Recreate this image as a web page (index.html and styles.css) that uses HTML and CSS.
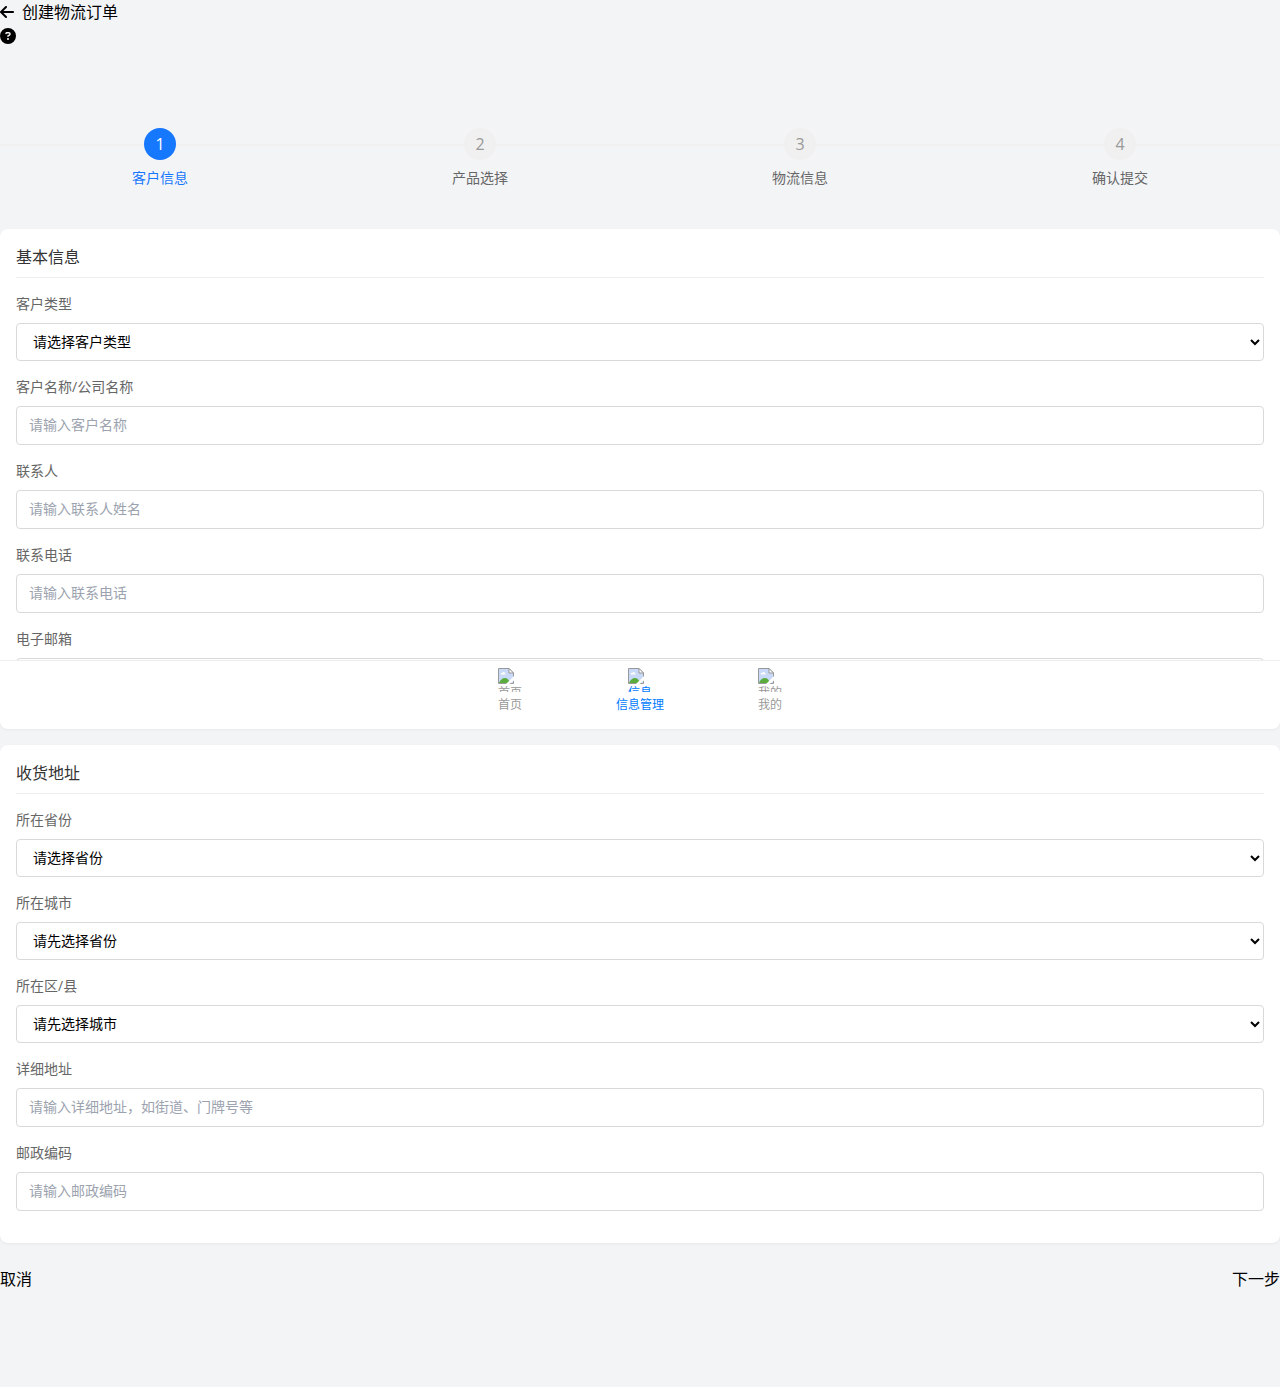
FILE: index.html
```html
<!DOCTYPE html>
<html lang="zh-CN">
<head>
<meta charset="utf-8">
<title>创建物流订单</title>
<link rel="stylesheet" href="styles.css">
</head>
<body>
<svg class="defs" width="0" height="0" aria-hidden="true">
  <symbol id="missing" viewBox="0 0 16 16">
    <path d="M.5.500h10.500l4.500 4.500v10.500H.5z" fill="#c9d9f8"/>
    <path d="M3 6.500c-.8-1.500.8-2.300 1.400-1.500.5-1.500 2.500-1.200 2.500.2 1.200 0 1.200 1.300.3 1.300z" fill="#fff"/>
    <path d="M1 15c1-3 3.500-5 6-5 2 0 4 1.500 5 5z" fill="#5aac3c"/>
    <path d="M.5 15.500V.5H11l4.500 4.500v10.500z" fill="none" stroke="#999"/>
    <path d="M11 .5V5h4.500z" fill="#fff" stroke="#999"/>
    <path d="M8 16L16 8v4.500L11.500 16z" fill="#fff"/>
  </symbol>
</svg>
<header class="header">
  <div class="header-left">
    <svg class="back" viewBox="0 0 448 512"><path d="M9.400 233.400c-12.500 12.500-12.500 32.800 0 45.300l160 160c12.500 12.500 32.800 12.500 45.300 0s12.500-32.800 0-45.300L109.200 288 416 288c17.700 0 32-14.300 32-32s-14.300-32-32-32l-306.700 0L214.600 118.600c12.500-12.500 12.500-32.800 0-45.300s-32.800-12.500-45.300 0l-160 160z"/></svg>
    <span>创建物流订单</span>
  </div>
  <div class="header-right">
    <svg class="help" viewBox="0 0 512 512"><path d="M256 512A256 256 0 1 0 256 0a256 256 0 1 0 0 512zM169.800 165.300c7.900-22.300 29.100-37.300 52.800-37.300l58.300 0c34.900 0 63.100 28.300 63.100 63.100c0 22.600-12.100 43.500-31.700 54.800L280 264.400c-.2 13-10.900 23.600-24 23.600c-13.300 0-24-10.700-24-24l0-13.500c0-8.600 4.600-16.500 12.100-20.800l44.300-25.400c4.700-2.700 7.600-7.700 7.600-13.100c0-8.400-6.800-15.100-15.100-15.100l-58.300 0c-3.400 0-6.400 2.100-7.500 5.300l-.4 1.200c-4.400 12.500-18.200 19-30.600 14.600s-19-18.200-14.600-30.600l.4-1.200zM224 352a32 32 0 1 1 64 0 32 32 0 1 1 -64 0z"/></svg>
  </div>
</header>
<main>
  <ol class="steps">
    <li class="step active"><span class="num">1</span><span class="name">客户信息</span></li>
    <li class="step"><span class="num">2</span><span class="name">产品选择</span></li>
    <li class="step"><span class="num">3</span><span class="name">物流信息</span></li>
    <li class="step"><span class="num">4</span><span class="name">确认提交</span></li>
  </ol>
  <section class="card">
    <h2 class="title">基本信息</h2>
    <div class="field"><label class="label">客户类型</label><select class="control select"><option>请选择客户类型</option></select></div>
    <div class="field"><label class="label">客户名称/公司名称</label><input class="control input" placeholder="请输入客户名称"></div>
    <div class="field"><label class="label">联系人</label><input class="control input" placeholder="请输入联系人姓名"></div>
    <div class="field"><label class="label">联系电话</label><input class="control input" placeholder="请输入联系电话"></div>
    <div class="field"><label class="label">电子邮箱</label><input class="control input"></div>
  </section>
  <section class="card">
    <h2 class="title">收货地址</h2>
    <div class="field"><label class="label">所在省份</label><select class="control select"><option>请选择省份</option></select></div>
    <div class="field"><label class="label">所在城市</label><select class="control select"><option>请先选择省份</option></select></div>
    <div class="field"><label class="label">所在区/县</label><select class="control select"><option>请先选择城市</option></select></div>
    <div class="field"><label class="label">详细地址</label><input class="control input" placeholder="请输入详细地址，如街道、门牌号等"></div>
    <div class="field"><label class="label">邮政编码</label><input class="control input" placeholder="请输入邮政编码"></div>
  </section>
  <div class="actions"><span>取消</span><span>下一步</span></div>
</main>
<nav class="tabbar">
  <a class="tab"><span class="tab-icon"><svg><use href="#missing"/></svg><span>首页</span></span><span class="tab-name">首页</span></a>
  <a class="tab current"><span class="tab-icon"><svg><use href="#missing"/></svg><span>信息</span></span><span class="tab-name">信息管理</span></a>
  <a class="tab"><span class="tab-icon"><svg><use href="#missing"/></svg><span>我的</span></span><span class="tab-name">我的</span></a>
</nav>
</body>
</html>
```
FILE: styles.css
```css
* { box-sizing: border-box; }
body {
  position: relative;
  margin: 0;
  min-height: 1387px;
  background: #f3f4f6;
  color: #000;
  font: 16px/24px "Open Sans", "Noto Sans CJK SC", sans-serif;
}
.defs { position: absolute; }
.header { height: 48px; }
.header-left { display: flex; align-items: center; gap: 8px; height: 24px; }
.header-right { display: flex; align-items: center; height: 24px; }
.back { width: 14px; height: 16px; }
.help { width: 16px; height: 16px; }
.steps {
  display: flex;
  margin: 0;
  padding: 80px 0 40px;
  list-style: none;
}
.step {
  flex: 1;
  display: flex;
  flex-direction: column;
  align-items: center;
  gap: 8px;
  background: linear-gradient(#f0f0f0, #f0f0f0) 0 16px / 100% 2px no-repeat;
}
.num {
  width: 32px;
  height: 32px;
  border-radius: 50%;
  background: #f0f0f0;
  color: #999;
  line-height: 32px;
  text-align: center;
}
.name { padding-bottom: 2px; color: #666; font-size: 14px; line-height: 19px; }
.active .num { background: #1677ff; color: #fff; }
.active .name { color: #1677ff; }
.card {
  margin-bottom: 16px;
  padding: 16px;
  border-radius: 8px;
  background: #fff;
  box-shadow: 0 1px 3px rgba(0, 0, 0, .05);
}
.title {
  margin: 0 0 16px;
  padding-bottom: 8px;
  border-bottom: 1px solid #eee;
  color: #333;
  font-size: 16px;
  font-weight: 400;
}
.field { margin-bottom: 16px; }
.label {
  display: block;
  margin-bottom: 10px;
  color: #666;
  font-size: 14px;
  line-height: 19px;
}
.control {
  display: block;
  width: 100%;
  margin: 0;
  padding: 7px 12px 9px;
  border: 1px solid #d9d9d9;
  border-radius: 4px;
  background: #fff;
  color: #000;
  font-family: inherit;
  font-size: 14px;
}
.select { height: 38px; }
.input { height: 39px; line-height: 21px; }
.input::placeholder { color: #9ca3af; }
.actions { display: flex; justify-content: space-between; padding-top: 8px; }
.tabbar {
  position: absolute;
  top: 660px;
  left: 0;
  right: 0;
  display: flex;
  justify-content: center;
  height: 60px;
  padding-top: 7px;
  border-top: 1px solid #eee;
  background: #fff;
}
.tab {
  display: flex;
  flex-direction: column;
  align-items: center;
  width: 130px;
  color: #999;
  font-size: 12px;
  line-height: 18px;
}
.tab.current { color: #007bff; }
.tab-icon { width: 24px; height: 24px; margin-bottom: 4px; overflow: hidden; }
.tab-icon svg { display: block; width: 16px; height: 16px; }
.tab-icon span { display: block; }
```
